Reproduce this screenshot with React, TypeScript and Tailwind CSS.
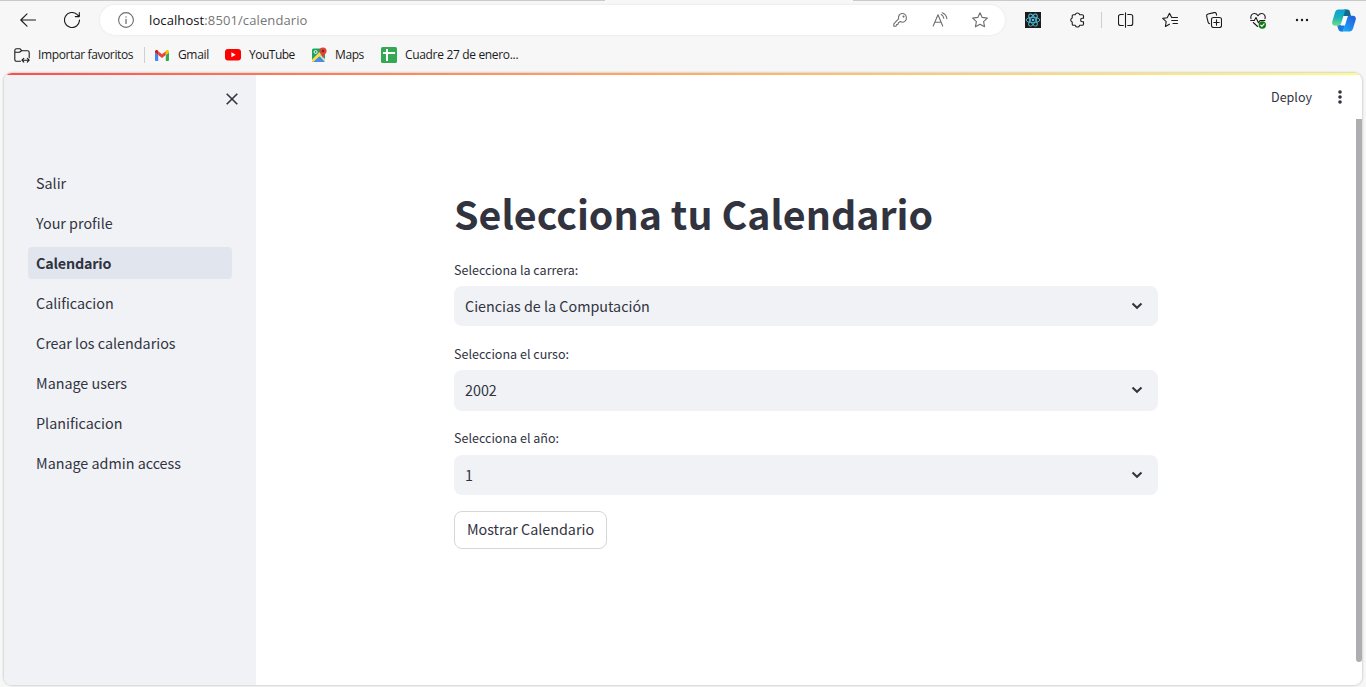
import type { ReactNode } from 'react';

const navItems = ['Salir', 'Your profile', 'Calendario', 'Calificacion', 'Crear los calendarios', 'Manage users', 'Planificacion', 'Manage admin access'];

function Cell({ children }: { children: ReactNode }) {
  return <div className="flex h-full w-11 shrink-0 items-center justify-center">{children}</div>;
}

function Stroke({ children, size = 16, className = 'text-[#1b1b1b]' }: { children: ReactNode; size?: number; className?: string }) {
  return (
    <svg width={size} height={size} viewBox={`0 0 ${size} ${size}`} fill="none" stroke="currentColor" strokeWidth="1.1" strokeLinecap="round" strokeLinejoin="round" className={className}>
      {children}
    </svg>
  );
}

const starPath = 'M8 .7l2.2 4.700 5.200.7-3.800 3.500 1 5.200L8 12.300l-4.600 2.500 1-5.200L.6 6.100l5.200-.7z';

function Toolbar() {
  return (
    <div className="flex h-10 items-center pl-1.5">
      <Cell>
        <Stroke><path d="M15.5 8H.8M7 1.8L.8 8 7 14.2" /></Stroke>
      </Cell>
      <Cell>
        <Stroke><path d="M15.5 8a7.5 7.5 0 1 1-2.2-5.3l1.9 1.8M15.3.6v4h-4" /></Stroke>
      </Cell>
      <div className="ml-1.5 flex h-[30px] w-[905px] shrink-0 items-center rounded-full bg-white pl-[18px] pr-[5px] shadow-[0_0_3px_rgba(0,0,0,0.08)]">
        <Stroke className="text-[#6e6e6e]">
          <circle cx="8" cy="8" r="7.4" />
          <path d="M8 7.4v4M8 4.8v.2" strokeWidth="1.3" />
        </Stroke>
        <span className="ml-[15px] whitespace-nowrap font-['Open_Sans'] text-[13px] leading-5 tracking-[0.1px] text-[#767676]">
          <span className="text-[#111]">localhost</span>:8501/calendario
        </span>
        <div className="ml-auto flex h-full items-center">
          <div className="flex w-10 justify-center">
            <Stroke className="text-[#6e6e6e]">
              <path d="M14.3 5.3a3.9 3.9 0 1 0-7.6 1.3L1.8 11.8v2.4h2.3l.5-1.6 1.5-.4.3-1.5 2-1.2a3.9 3.9 0 0 0 5.9-4.2z" />
              <circle cx="11.5" cy="4.6" r=".5" />
            </Stroke>
          </div>
          <div className="flex w-10 justify-center">
            <Stroke className="text-[#6e6e6e]">
              <path d="M1.2 14L6 2.8 10.7 14M2.9 10.2h6.2M9.2 2.6c1.5.8 2.3 2 2.6 3.7M10.2.7c2.6 1 4.3 3 4.7 6" />
            </Stroke>
          </div>
          <div className="flex w-10 justify-center">
            <Stroke className="text-[#6e6e6e]"><path d={starPath} /></Stroke>
          </div>
        </div>
      </div>
      <div className="ml-1.5 flex h-full items-center">
        <Cell>
          <svg width="16" height="16" viewBox="0 0 16 16" fill="none" stroke="#53c1de" strokeWidth=".9">
            <rect width="16" height="16" fill="#1c1c1c" stroke="none" />
            <ellipse cx="8" cy="8" rx="6.8" ry="2.7" />
            <ellipse cx="8" cy="8" rx="6.8" ry="2.7" transform="rotate(60 8 8)" />
            <ellipse cx="8" cy="8" rx="6.8" ry="2.7" transform="rotate(120 8 8)" />
            <circle cx="8" cy="8" r="1.3" fill="#53c1de" stroke="none" />
          </svg>
        </Cell>
        <Cell>
          <Stroke>
            <path d="M4.500 2.700H6.300a2.200 2.200 0 0 1 4.300 0h2.600a1.300 1.300 0 0 1 1.300 1.300v2.300h-1.200a1.700 1.700 0 0 0 0 3.400h1.200V12a1.300 1.300 0 0 1-1.300 1.300h-2.600a2.200 2.200 0 0 1-4.300 0H4.500A1.300 1.300 0 0 1 3.200 12v-2a2.100 2.100 0 0 1 0-4V4a1.300 1.300 0 0 1 1.300-1.300z" />
          </Stroke>
        </Cell>
        <div className="mx-0.5 h-4 w-px bg-[#cfcfcf]" />
        <Cell>
          <Stroke><path d="M7.500 .8v14.400M5.300 2.500H2.500a2 2 0 0 0-2 2v7a2 2 0 0 0 2 2h2.800M9.700 2.500h3a2 2 0 0 1 2 2v7a2 2 0 0 1-2 2h-3" /></Stroke>
        </Cell>
        <Cell>
          <Stroke><path d="M7.400 12.200l-4 2.300.8-4.800L.7 6.400l4.500-.6L7.500 1.200l2.200 4.400M10.500 5.500h5M9.700 8.500h5.800M11 11.500h4.500" /></Stroke>
        </Cell>
        <Cell>
          <Stroke>
            <rect x="5.500" y="5.500" width="10" height="10" rx="2" />
            <path d="M10.500 7.800v5.400M7.800 10.500h5.400M3.500 11.600a2 2 0 0 1-1.400-1.500L.7 4.400A2 2 0 0 1 2.100 2L8 .6a2 2 0 0 1 2.400 1.400l.2 1.200" />
          </Stroke>
        </Cell>
        <Cell>
          <svg width="16" height="17" viewBox="0 0 16 17" fill="none" stroke="#1b1b1b" strokeWidth="1.1" strokeLinecap="round" strokeLinejoin="round">
            <path d="M1 6.700C.2 3.800 2 1.500 4.300 1.500 6 1.500 7.200 2.400 8 3.700c.8-1.300 2-2.200 3.700-2.200 2.300 0 4.100 2.300 3.300 5.200M.7 8.500h3.600L6 5.500l2.400 5.300L10 8.500h4.800M3.300 10.500L7.600 14.500" />
            <circle cx="12.300" cy="13" r="3.700" fill="#107c10" stroke="none" />
            <path d="M10.700 13.100l1.200 1.200 2.200-2.500" stroke="white" />
          </svg>
        </Cell>
        <Cell>
          <svg width="14" height="4" viewBox="0 0 14 4" fill="#1b1b1b">
            <circle cx="2" cy="2" r="1.2" /><circle cx="7" cy="2" r="1.2" /><circle cx="12" cy="2" r="1.2" />
          </svg>
        </Cell>
        <div className="flex w-10 justify-center">
          <svg width="24" height="23" viewBox="0 0 24 23">
            <defs>
              <linearGradient id="copLeft" x1="0" y1="0" x2="0" y2="1">
                <stop offset="0" stopColor="#0c9fd6" /><stop offset=".5" stopColor="#1cb3b8" /><stop offset="1" stopColor="#6fdc8c" />
              </linearGradient>
              <linearGradient id="copRight" x1="0" y1="1" x2="1" y2="0">
                <stop offset="0" stopColor="#19b9f5" /><stop offset=".5" stopColor="#2083ee" /><stop offset="1" stopColor="#2358d6" />
              </linearGradient>
            </defs>
            <path d="M12 .5h3.500c1.500 0 2 .9 2.400 2.200L19 7h-8z" fill="#126a93" />
            <path d="M5 16h8l-2 6.500H9c-1.600 0-2.300-1-2.700-2.400z" fill="#1b78df" />
            <path d="M6.500.5H15c-1.300 0-1.900.9-2.300 2.200L9.300 14c-.6 1.900-1.600 2.700-3.300 2.700H3.100C.8 16.700-.3 15 .3 12.600L3 3.500C3.600 1.500 4.700.5 6.500.5z" fill="url(#copLeft)" />
            <path d="M17.500 22.500H9c1.300 0 1.900-.9 2.300-2.200L14.700 9c.6-1.500 1.600-2.300 3.300-2.300h2.900c2.300 0 3.400 1.700 2.800 4.100L21 19.500c-.6 2-1.700 3-3.500 3z" fill="url(#copRight)" />
            <path d="M12.200 7.200h3.600l-2.900 9.200H8.600c.8-.6 1.200-1.300 1.500-2.300z" fill="#f7fbfd" />
          </svg>
        </div>
      </div>
    </div>
  );
}

function Bookmark({ icon, label, className }: { icon: ReactNode; label: string; className: string }) {
  return (
    <div className={`flex shrink-0 items-center whitespace-nowrap ${className}`}>
      {icon}
      <span>{label}</span>
    </div>
  );
}

function Bookmarks() {
  return (
    <div className="flex h-[30px] items-center pl-[14px] font-['Open_Sans'] text-[12px] leading-4 text-[#1b1b1b]">
      <Bookmark
        className="w-[130px] gap-2 tracking-[-0.38px]"
        label="Importar favoritos"
        icon={<Stroke><path d="M6.500 14.300H2.600A1.800 1.800 0 0 1 .8 12.500v-9c0-1 .8-1.800 1.800-1.800h3.200l2 2h5.600c1 0 1.800.8 1.800 1.800v5.300M.8 5.300h4.700l2-1.600M8 13.200h7M9.800 11.300L7.900 13.200l1.900 1.900M13.300 11.300l1.900 1.900-1.900 1.900" /></Stroke>}
      />
      <div className="h-4 w-px bg-[#cfcfcf]" />
      <Bookmark
        className="ml-[10px] w-[70px] gap-[9px] tracking-[-0.35px]"
        label="Gmail"
        icon={
          <svg width="14" height="11" viewBox="0 0 14 11">
            <path d="M0 2.500l3.200 2.300V11H1a1 1 0 0 1-1-1z" fill="#4285f4" />
            <path d="M14 2.500l-3.200 2.300V11H13a1 1 0 0 0 1-1z" fill="#34a853" />
            <path d="M3.200 1.300L7 4.200l3.800-2.900v3.800L7 8 3.200 5.100z" fill="#ea4335" />
            <path d="M0 2.500V1.700C0 .2 1.600-.4 2.800.6l.4.300v4.200z" fill="#c5221f" />
            <path d="M14 2.500v-.8c0-1.500-1.600-2.100-2.800-1.100l-.4.300v4.200z" fill="#fbbc04" />
          </svg>
        }
      />
      <Bookmark
        className="w-[87px] gap-2 tracking-[-0.5px]"
        label="YouTube"
        icon={
          <svg width="16" height="12" viewBox="0 0 16 12">
            <rect width="16" height="11.500" rx="3" fill="#f00" />
            <path d="M6.400 3.300v5L10.700 5.800z" fill="white" />
          </svg>
        }
      />
      <Bookmark
        className="w-[69px] gap-2 tracking-[-0.4px]"
        label="Maps"
        icon={
          <svg width="15" height="16" viewBox="0 0 15 16">
            <rect y="1.500" width="13" height="13.500" rx="1.500" fill="#1ea362" />
            <path d="M0 12.500L10.500 2 13 4.500 1.500 15 0 14.500z" fill="#ffd84c" />
            <path d="M1.500 15l5.200-5 5.300 5z" fill="#4a89f3" />
            <path d="M7.600 9.300L9 8l4 4v2l-.6.800z" fill="#d6d8dc" />
            <circle cx="3.600" cy="5" r="1.500" fill="none" stroke="white" strokeWidth=".9" />
            <path d="M11 .5a3.600 3.600 0 0 1 3.600 3.600c0 2.700-2.900 3.600-3.600 7.200-.7-3.600-3.600-4.500-3.600-7.200A3.600 3.600 0 0 1 11 .5z" fill="#db4437" />
            <circle cx="11" cy="4" r="1.200" fill="#7b231e" />
          </svg>
        }
      />
      <Bookmark
        className="gap-2 tracking-[-0.33px]"
        label="Cuadre 27 de enero..."
        icon={
          <svg width="16" height="16" viewBox="0 0 16 16">
            <rect width="16" height="16" rx="1.500" fill="#34a853" />
            <path d="M2 5h12v2H7v7H5V7H2zM5 2h2v4H5z" fill="white" />
          </svg>
        }
      />
    </div>
  );
}

function Field({ label, value, className, boxClass = 'h-10' }: { label: string; value: string; className: string; boxClass?: string }) {
  return (
    <div className={className}>
      <div className="flex h-5 items-center text-[12.54px] leading-5">{label}</div>
      <div className={`mt-[6px] flex items-start justify-between rounded-lg bg-[#f0f2f6] pl-[11px] pr-[15px] ${boxClass}`}>
        <span className="mt-2">{value}</span>
        <svg width="12" height="8" viewBox="0 0 12 8" fill="none" stroke="#31333f" strokeWidth="2" className="mt-4">
          <path d="M1.500 1.500L6 5.800l4.500-4.300" />
        </svg>
      </div>
    </div>
  );
}

export default function App() {
  return (
    <div className="flex h-[687px] w-[1366px] flex-col overflow-hidden bg-[#f7f7f7] font-['Noto_Sans_CJK_SC',sans-serif] text-[14.33px] leading-6 text-[#31333f]">
      <div className="flex h-px shrink-0 justify-between">
        <div className="w-[605px] bg-[#cacaca]" />
        <div className="w-[513px] bg-[#cacaca]" />
      </div>
      <div className="-mt-px h-10 shrink-0"><Toolbar /></div>
      <div className="h-[33px] shrink-0"><Bookmarks /></div>
      <div className="mx-1 flex h-[612px] shrink-0 flex-col overflow-hidden rounded-lg bg-white shadow-[0_0_2px_1px_rgba(0,0,0,0.14)]">
        <div className="h-0.5 shrink-0 bg-linear-to-r from-[#ff4b4b] to-[#fffd80]" />
        <div className="flex min-h-0 flex-1">
          <aside className="flex w-[252px] shrink-0 flex-col bg-[#f0f2f6] px-6">
            <div className="flex h-12 items-center justify-end">
              <svg width="12" height="12" viewBox="0 0 12 12" fill="none" stroke="#31333f" strokeWidth="1.6" className="mr-[-6px]">
                <path d="M.7.7l10.600 10.600M11.300.7L.7 11.300" />
              </svg>
            </div>
            <nav className="mt-11 flex flex-col gap-2">
              {navItems.map((item) => (
                <a key={item} className={`flex h-8 items-center rounded px-2 ${item === 'Calendario' ? 'bg-[#e1e6ee] font-bold tracking-[-0.2px]' : ''}`}>
                  {item}
                </a>
              ))}
            </nav>
          </aside>
          <main className="flex flex-1 flex-col">
            <div className="flex h-11 shrink-0 items-center justify-end pr-[19px] text-[12.54px]">
              <span>Deploy</span>
              <svg width="6" height="14" viewBox="0 0 6 14" fill="#31333f" className="ml-[25px]">
                <circle cx="3" cy="2" r="1.8" /><circle cx="3" cy="7" r="1.8" /><circle cx="3" cy="12" r="1.8" />
              </svg>
            </div>
            <div className="flex flex-1 justify-between">
              <section className="ml-[198px] w-[704px] pt-[68px]">
                <h1 className="h-[54px] whitespace-nowrap text-[39.33px] font-bold leading-[52px]">Selecciona tu Calendario</h1>
                <Field className="mt-[19px]" label="Selecciona la carrera:" value="Ciencias de la Computación" />
                <Field className="mt-[18px]" label="Selecciona el curso:" value="2002" boxClass="h-[41px]" />
                <Field className="mt-[17px]" label="Selecciona el año:" value="1" boxClass="mt-[7px] h-10" />
                <button className="mt-4 flex h-[38px] w-[153px] items-center justify-center whitespace-nowrap rounded-lg border border-[#d6d6d9] bg-white pb-0.5">Mostrar Calendario</button>
              </section>
              <div className="h-[543px] w-1.5 rounded-b-full bg-[#adadb2]" />
            </div>
          </main>
        </div>
      </div>
    </div>
  );
}
